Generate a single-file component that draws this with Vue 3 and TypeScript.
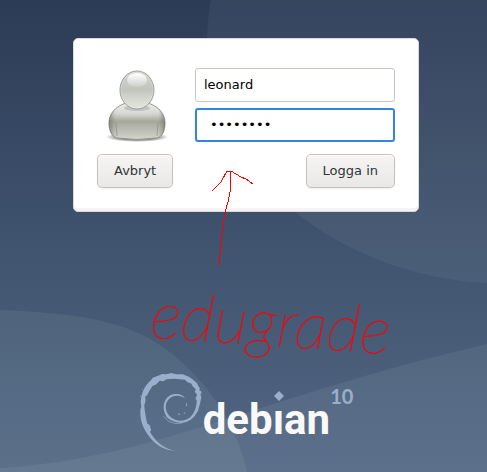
<script setup lang="ts">
import { ref } from 'vue'

const username = ref<string>('leonard')
const password = ref<string>('password')

function cancel(): void {
  username.value = ''
  password.value = ''
}
</script>

<template>
  <main class="desktop">
    <svg class="wallpaper" viewBox="0 0 487 472" preserveAspectRatio="none" aria-hidden="true">
      <path d="M211 0C208 16 207 28 207 45C220 120 250 176 295 212C350 256 420 280 487 283V0Z" fill="#fff" fill-opacity=".05" />
      <path d="M0 310C75 313 124 320 163 347C208 380 237 425 247 472H0Z" fill="#d0f0e0" fill-opacity=".07" />
      <path d="M0 468C80 463 145 445 220 421C310 392 395 365 487 344V472H0Z" fill="#e0f0ee" fill-opacity=".07" />
    </svg>

    <form class="card" @submit.prevent>
      <div class="credentials">
        <svg class="avatar" viewBox="0 0 66 74" role="img" aria-label="User">
          <defs>
            <linearGradient id="head" x1="0" y1="0" x2="0" y2="1">
              <stop offset="0" stop-color="#d4d6d1" />
              <stop offset=".5" stop-color="#c1c4bd" />
              <stop offset=".65" stop-color="#cfd2cb" />
              <stop offset="1" stop-color="#e3e5df" />
            </linearGradient>
            <linearGradient id="shine" x1="0" y1="0" x2="0" y2="1">
              <stop offset="0" stop-color="#fff" />
              <stop offset="1" stop-color="#fff" stop-opacity=".1" />
            </linearGradient>
            <linearGradient id="body" x1="0" y1="0" x2="0" y2="1">
              <stop offset="0" stop-color="#f5f5f3" />
              <stop offset=".3" stop-color="#dddeda" />
              <stop offset=".52" stop-color="#a8aa9f" />
              <stop offset="1" stop-color="#d8d9d2" />
            </linearGradient>
            <linearGradient id="side" x1="0" y1="0" x2="1" y2="0">
              <stop offset="0" stop-color="#555850" stop-opacity=".5" />
              <stop offset=".12" stop-color="#777a70" stop-opacity=".05" />
              <stop offset=".88" stop-color="#777a70" stop-opacity=".05" />
              <stop offset="1" stop-color="#555850" stop-opacity=".5" />
            </linearGradient>
            <radialGradient id="ground">
              <stop offset=".6" stop-color="#333" stop-opacity=".6" />
              <stop offset="1" stop-color="#333" stop-opacity="0" />
            </radialGradient>
          </defs>
          <ellipse cx="34" cy="69" rx="31" ry="5" fill="url(#ground)" />
          <path d="M34 34C49 33 62 42 62 55C62 63 59 69 54 70Q34 73 14 70C9 69 6 63 6 55C6 42 19 33 34 34Z" fill="url(#body)" stroke="#91938b" />
          <path d="M34 34C49 33 62 42 62 55C62 63 59 69 54 70Q34 73 14 70C9 69 6 63 6 55C6 42 19 33 34 34Z" fill="url(#side)" />
          <path d="M13 55L14 68M55 55L54 68" stroke="#83857b" stroke-opacity=".6" />
          <ellipse cx="34" cy="40" rx="13" ry="3" fill="#666" fill-opacity=".25" />
          <ellipse cx="34" cy="22" rx="17" ry="19" fill="url(#head)" stroke="#9b9e98" />
          <ellipse cx="34" cy="22" rx="16" ry="18" fill="none" stroke="#fff" stroke-opacity=".2" />
          <ellipse cx="34" cy="12" rx="10" ry="7" fill="url(#shine)" />
        </svg>
        <div class="fields">
          <input v-model="username" class="entry" type="text" aria-label="Användarnamn" autocomplete="off" />
          <input v-model="password" class="entry entry-active" type="password" aria-label="Lösenord" autocomplete="off" />
        </div>
      </div>
      <div class="actions">
        <button class="button" type="button" @click="cancel">Avbryt</button>
        <button class="button" type="submit">Logga in</button>
      </div>
    </form>

    <div class="note">
      <svg class="arrow" viewBox="0 0 46 100" aria-hidden="true">
        <path d="M8 96L9 86L10 71L14 43L17 33L19 23V2M1 22L10 13L16 2H20L30 8L35 10L42 15" fill="none" stroke="#f00" shape-rendering="crispEdges" />
      </svg>
      <span class="scribble">edugrade</span>
    </div>

    <footer class="brand">
      <svg class="swirl" viewBox="12 26 195 242" aria-hidden="true">
        <path
          fill="#9aafcb"
          d="M122 265C91 266 58 246 38 215C22 191 15 169 16 140L19 132L17 116C20 89 28 68 47 52L54 43L72 36L83 31L95 32L110 28L125 32L145 32L162 39L176 48L188 59L198 76L195 80L203 86L199 92L202 103L198 120L192 143L181 160C164 180 139 184 119 176C99 169 87 153 87 132C88 106 105 92 124 92C140 92 149 98 152 105C137 94 116 95 104 107C89 122 91 145 105 159C121 177 150 178 168 163C181 151 187 134 188 113L184 106L189 95L182 85L185 78L176 69L171 60L160 56L152 49L120 46L96 47L86 53L75 52L64 63L53 68L43 84L37 96L31 100L32 113L28 128L30 145L33 164L37 182L45 187L49 204L45 207C61 235 87 259 122 265Z"
        />
        <path d="M86 160Q101 180 122 182L144 181M94 160L105 169M198 82L201 93M184 142L180 150" fill="none" stroke="#9aafcb" stroke-width="2" />
        <path d="M21 78l3 -2v4zM156 118l2 3v7l-3 2zM131 151l7 3l-5 3zM148 151l3 -3l2 1l-3 4zM16 100l2 -5v9z" fill="#9aafcb" />
      </svg>
      <span class="wordmark">deb<span class="dotted">ı<svg class="diamond" viewBox="0 0 10 10" aria-hidden="true"><path d="M5 0L10 5L5 10L0 5Z" fill="#9aafcb" /></svg></span>an</span>
      <span class="version">10</span>
    </footer>
  </main>
</template>

<style>
body {
  margin: 0;
}
</style>

<style scoped>
.desktop {
  position: relative;
  isolation: isolate;
  box-sizing: border-box;
  min-height: 100vh;
  padding: 38px 68px 16px 73px;
  overflow: hidden;
  background: linear-gradient(#2c3b56, #415570 55%, #536784);
  font: 13px/16px "DejaVu Sans", sans-serif;
}

.wallpaper {
  position: absolute;
  inset: 0;
  z-index: -1;
  width: 100%;
  height: 100%;
}

.card {
  display: grid;
  gap: 12px;
  padding: 29px 23px 23px;
  border: 1px solid #dcdad8;
  border-radius: 5px;
  background: #fff;
  box-shadow: inset 0 -3px #f5f4f3;
}

.credentials {
  display: grid;
  grid-template-columns: 66px 1fr;
  gap: 26px;
  padding-left: 6px;
}

.avatar {
  width: 66px;
  height: 74px;
}

.fields {
  display: grid;
  gap: 6px;
}

.entry {
  box-sizing: border-box;
  width: 100%;
  height: 34px;
  padding: 0 8px 2px;
  border: 1px solid #c8c4be;
  border-radius: 3px;
  outline: none;
  background: #fff;
  color: #000;
  font: inherit;
}

.entry-active {
  padding: 0 13px 2px;
  border: 2px solid #3584e4;
}

.actions {
  display: flex;
  justify-content: space-between;
}

.button {
  height: 34px;
  padding: 0 16px;
  border: 1px solid #c8c2bc;
  border-radius: 5px;
  background: linear-gradient(#f6f5f4, #eae8e6);
  box-shadow: inset 0 1px #fff, 0 1px 2px #00000012;
  color: #2e3436;
  font: inherit;
}

.note {
  position: relative;
  padding: 77px 0 0 78px;
  color: #f00;
}

.arrow {
  position: absolute;
  top: -43px;
  left: 138px;
  width: 46px;
  height: 100px;
}

.scribble {
  display: inline-block;
  font: italic 100 66px/64px Lato, "Liberation Sans", sans-serif;
  text-shadow: 0 0 #f00, 0 0 #f00;
  transform: rotate(4deg);
}

.brand {
  display: flex;
  justify-content: center;
  align-items: flex-start;
  padding-top: 19px;
  color: #9aafcb;
}

.swirl {
  width: 64px;
  height: 80px;
}

.wordmark {
  padding-top: 20px;
  color: #f9f9f9;
  font: bold 42px/56px Roboto, "Noto Sans", sans-serif;
}

.dotted {
  position: relative;
}

.diamond {
  position: absolute;
  top: -4px;
  left: 1px;
  width: 10px;
  height: 10px;
}

.version {
  padding-top: 12px;
  font: bold 20px/24px Lato, sans-serif;
}
</style>
